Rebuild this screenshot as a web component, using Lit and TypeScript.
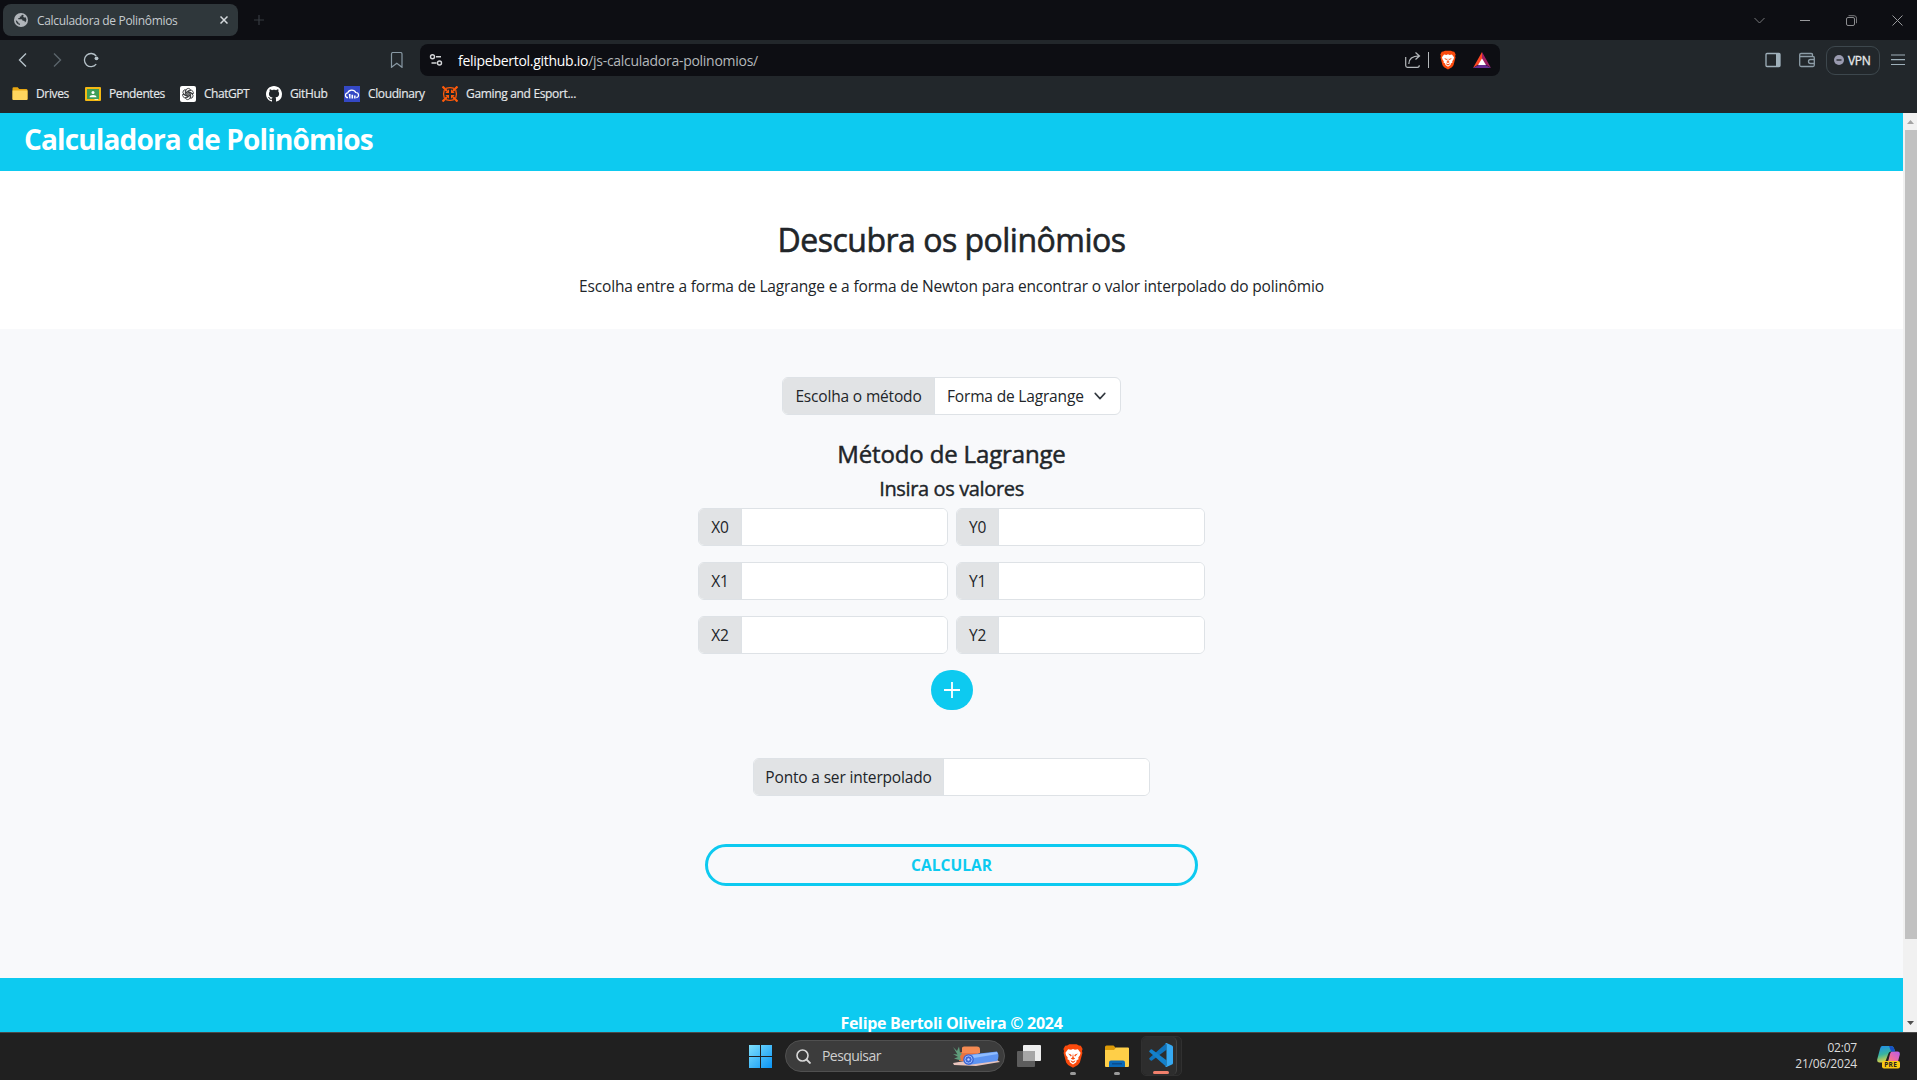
import { LitElement, html, css, svg } from "lit";
import { customElement, state } from "lit/decorators.js";

const BRAVE = svg`
  <path d="M5 1.5 7.3.3h7.4L17 1.5l2 .3 1.8 3.4-.7 2 .5 2-2.6 9.6-2 2.7L11 24.3 6 21.5l-2-2.7L1.400 9.200l.5-2-.7-2L3 1.800z" fill="#fb4a0c"/>
  <path d="M6 5.300l3 .5L11 5l2 .8 3-.5 2.700 3.600-.6 2.500-1.700 2.400.3 1.700-2 1.200-.4 2L11 20.800l-3.300-2.100-.4-2-2-1.200.3-1.700-1.700-2.400-.6-2.500z" fill="#fff"/>
  <path d="M6 9.800l3 .8.700 1.400-.9.700zM16 9.800l-3 .8-.7 1.400.9.700zM11 9.500l.7 4.200 1.600 1L11 16l-2.300-1.300 1.600-1zM8.500 16.500 11 17.800l2.500-1.300-.5 1.400-2 1.400-2-1.400z" fill="#fb4a0c"/>`;

const bookmarks = [
  {
    label: "Drives", cls: "b1",
    icon: svg`<path d="M.5 2.500q0-1.200 1.200-1.200h4l1.500 1.700h7q1.300 0 1.300 1.300V13q0 1-1 1h-13q-1 0-1-1z" fill="#e8a712"/><path d="M.5 4.500h15V13q0 1-1 1h-13q-1 0-1-1z" fill="#ffd55e"/>`,
  },
  {
    label: "Pendentes", cls: "b2",
    icon: svg`<rect y="1" width="16" height="14" rx="1" fill="#f4b913"/><rect x="2" y="3" width="12" height="10" fill="#3f9d58"/><circle cx="8" cy="6.500" r="1.500" fill="#fff"/><path d="M4.500 11.200c0-3 7-3 7 0z" fill="#fff"/><path d="M9.500 13h3.500v1H9.500z" fill="#fff" opacity=".7"/>`,
  },
  {
    label: "ChatGPT", cls: "b3",
    icon: svg`<rect width="16" height="16" rx="2" fill="#fff"/><g fill="none" stroke="#2b2d2f" stroke-width=".8">${[0, 60, 120, 180, 240, 300].map(
      (a) => svg`<path transform="rotate(${a} 8 8)" d="M5.900 9.300V4.600Q6.200 2.400 8.300 2.400 9.700 2.400 10.500 3.500L7.100 5.500V8.200"/>`)}</g>`,
  },
  {
    label: "GitHub", cls: "b4",
    icon: svg`<path fill="#fff" d="M8 0C3.580 0 0 3.580 0 8c0 3.540 2.290 6.530 5.470 7.590.4.070.55-.17.55-.38 0-.19-.01-.82-.01-1.490-2.010.37-2.530-.49-2.690-.94-.09-.23-.48-.94-.82-1.130-.28-.15-.68-.52-.01-.53.63-.01 1.080.58 1.230.82.72 1.210 1.870.87 2.330.66.07-.52.28-.87.51-1.070-1.780-.2-3.640-.89-3.640-3.950 0-.87.31-1.590.82-2.150-.08-.2-.36-1.020.08-2.120 0 0 .67-.21 2.200.82.64-.18 1.320-.27 2-.27s1.360.09 2 .27c1.530-1.040 2.200-.82 2.200-.82.44 1.100.16 1.920.08 2.120.51.56.82 1.270.82 2.150 0 3.070-1.870 3.750-3.650 3.950.29.25.54.73.54 1.480 0 1.070-.01 1.930-.01 2.200 0 .21.15.46.55.38A8.010 8.010 0 0 0 16 8c0-4.420-3.580-8-8-8"/>`,
  },
  {
    label: "Cloudinary", cls: "b5",
    icon: svg`<rect width="16" height="16" fill="#3448c5"/><path d="M4 11.700C.7 11.500.7 7.300 3.700 6.900 5 3.200 10.300 3.200 11.700 6.500c3.600.2 3.800 4.500.6 5.200" fill="none" stroke="#fff" stroke-width="1.200"/><path d="M4.800 8h1.700v4.500H5.300zM7.500 8.800h1.600v3.700H7.500zM10.100 9.600h1.500v2.900h-1.500z" fill="#fff"/>`,
  },
  {
    label: "Gaming and Esport...", cls: "b6",
    icon: svg`<g fill="none" stroke="#ff5a0a" stroke-width="1.300"><path d="M4 2.300q4-1.500 8 0M4 13.700q4 1.500 8 0M2.300 4q-1.500 4 0 8M13.700 4q1.500 4 0 8"/><path d="M.5.500l4.500 4.500M15.500.500 11 5M.5 15.500 5 11M15.500 15.500 11 11" stroke-width="2.200"/></g><path d="M3.300 7h3.700V3.300zM12.700 7H9V3.300zM3.300 9H7v3.700zM12.700 9H9v3.700z" fill="#ff5a0a"/>`,
  },
];

@customElement("browser-chrome")
class BrowserChrome extends LitElement {
  static styles = css`
    :host { display: block; height: 113px; color: #e6e9eb; }
    svg { display: block; flex: none; }
    .tabs { height: 40px; background: #0d0e13; display: flex; align-items: center; }
    .tab { width: 235px; height: 32px; margin-left: 3px; padding: 0 10px 0 11px; box-sizing: border-box; border-radius: 8px; background: #2f373b; display: flex; align-items: center; font-size: 12px; color: #c6cbcf; }
    .tab .name { margin-left: 9px; letter-spacing: -0.33px; flex: 1; white-space: nowrap; }
    .new { margin-left: 16px; }
    .win { margin-left: auto; margin-right: 14px; display: flex; gap: 28px; }
    .bar { height: 40px; background: #22272b; display: flex; align-items: center; }
    .nav { display: flex; gap: 18px; padding-left: 15px; width: 405px; box-sizing: border-box; align-items: center; }
    .nav .mark { margin-left: auto; }
    .omni { margin: 0 0 0 15px; width: 1080px; height: 32px; border-radius: 8px; background: #0d0e13; box-sizing: border-box; padding: 0 8px; display: flex; align-items: center; }
    .url { margin-left: 14px; font-size: 14px; letter-spacing: -0.28px; color: #b4b8bb; flex: 1; }
    .url b { font-weight: 400; color: #fff; }
    .sep { width: 1px; height: 16px; background: #b4b8bb; margin: 0 10px 0 7px; }
    .brave { margin-right: 15px; }
    .tools { margin: 0 12px 0 auto; display: flex; align-items: center; }
    .vpn { width: 54px; height: 29px; box-sizing: border-box; border: 1px solid #3d474d; border-radius: 9px; margin: 0 11px; display: flex; align-items: center; gap: 4px; padding-left: 7px; font-size: 12px; letter-spacing: -0.3px; -webkit-text-stroke: 0.3px; }
    .marks { height: 33px; background: #22272b; display: flex; padding-left: 12px; }
    .marks .item { display: flex; height: 27px; align-items: center; gap: 8px; font-size: 12px; white-space: nowrap; box-sizing: border-box; -webkit-text-stroke: 0.15px; }
    .b1 { width: 73px; letter-spacing: -0.35px; } .b2 { width: 95px; letter-spacing: -0.4px; } .b3 { width: 86px; letter-spacing: -0.45px; }
    .b4 { width: 78px; letter-spacing: -0.35px; } .b5 { width: 98px; letter-spacing: -0.38px; } .b6 { letter-spacing: -0.33px; }
  `;
  render() {
    return html`
      <div class="tabs">
        <div class="tab">
          <svg width="14" height="14" viewBox="0 0 14 14"><circle cx="7" cy="7" r="7" fill="#b0b5ba"/><path d="M8.300 1.700Q6.800 2.200 7.300 3.400H5.800v1.500H4.300v1.400h3.300q1 .2 1 1.400h1.500q1 .3.800 1.900 1.500-.8 1.500-3-.2-1.600-1.200-2.700-.5.800-1.500.4-1-.9 0-1.800Q9.200 1.800 8.300 1.700zM1.800 6.700Q1.600 10.800 5.900 12.100v-1.600H4.800q-.7-.3-.5-1.600Q3 8.700 1.800 6.700z" fill="#2f373b"/></svg>
          <span class="name">Calculadora de Polinômios</span>
          <svg width="8" height="8" viewBox="0 0 8 8"><path d="M.5.5l7 7m0-7l-7 7" stroke="#d5d9dc" stroke-width="1.500"/></svg>
        </div>
        <svg class="new" width="10" height="10" viewBox="0 0 10 10"><path d="M5 0v10M0 5h10" stroke="#363b41" stroke-width="1.200"/></svg>
        <div class="win">
          <svg width="11" height="11" viewBox="0 0 11 11"><path d="M.5 3l5 5 5-5" fill="none" stroke="#76777b"/></svg>
          <svg width="18" height="11" viewBox="0 0 18 11"><path d="M7 5.500h10" stroke="#98999c"/></svg>
          <svg width="18" height="11" viewBox="0 0 18 11"><rect x="7.500" y="2.500" width="8" height="8" rx="1.500" fill="none" stroke="#8c8d90"/><path d="M9.500.7h5.500q2.500 0 2.500 2.500v5" fill="none" stroke="#77787b"/></svg>
          <svg width="18" height="11" viewBox="0 0 18 11"><path d="M7.500.5l10 10m0-10l-10 10" stroke="#98999c"/></svg>
        </div>
      </div>
      <div class="bar">
        <div class="nav">
          <svg width="16" height="16" viewBox="0 0 16 16"><path d="M11 1.500L4.500 8l6.500 6.500" fill="none" stroke="#b6c2c9" stroke-width="1.400"/></svg>
          <svg width="16" height="16" viewBox="0 0 16 16"><path d="M5 1.500L11.500 8 5 14.500" fill="none" stroke="#5b656b" stroke-width="1.400"/></svg>
          <svg width="16" height="16" viewBox="0 0 16 16"><path d="M13.200 12.200A6.600 6.600 0 1 1 13.200 4" fill="none" stroke="#b6c2c9" stroke-width="1.300"/><circle cx="13.500" cy="6.300" r="1.900" fill="#b6c2c9"/></svg>
          <svg class="mark" width="16" height="16" viewBox="0 0 16 16"><path d="M2.500 2q0-1.500 1.500-1.500h7.500q1.500 0 1.500 1.500v13.300L7.800 11.300 2.500 15.300z" fill="none" stroke="#8898a3" stroke-width="1.200"/></svg>
        </div>
        <div class="omni">
          <svg width="16" height="16" viewBox="0 0 16 16"><g fill="none" stroke="#d4d6d8" stroke-width="1.400"><circle cx="4.500" cy="4.800" r="2"/><circle cx="11.500" cy="11" r="2"/><path d="M8 4.800H13M3.500 11H8.500"/></g></svg>
          <span class="url"><b>felipebertol.github.io</b>/js-calculadora-polinomios/</span>
          <svg width="16" height="16" viewBox="0 0 16 16"><path d="M.7 5v8.500q0 1.800 1.800 1.800h10q1.800 0 1.800-2M3.800 12q0-8 10.500-8.200M10.500.5L14.500 4l-4 3.500" fill="none" stroke="#b4b8bb" stroke-width="1.200"/></svg>
          <i class="sep"></i>
          <svg class="brave" width="18" height="20" viewBox="0 -0.500 22 25.500">${BRAVE}</svg>
          <svg width="20" height="18" viewBox="0 0 20 18"><path d="M10 1L1 17l9-6z" fill="#ff4724"/><path d="M10 1l9 16-9-6z" fill="#9e1f63"/><path d="M1 17h18l-9-5z" fill="#662d91"/><path d="M10 7.500L6 14h8z" fill="#fff"/></svg>
        </div>
        <div class="tools">
          <svg width="16" height="16" viewBox="0 0 16 16"><rect x="1" y="1.500" width="14" height="13" rx="1" fill="none" stroke="#9fb0ba" stroke-width="1.300"/><path d="M11 1.500h4v13h-4z" fill="#9fb0ba"/></svg>
          <svg width="34" height="16" viewBox="0 0 34 16"><g fill="none" stroke="#8d9da7" stroke-width="1.300"><path d="M31.500 5V2.800q0-1.300-1.300-1.300H20q-1.300 0-1.300 1.300V13q0 1.500 1.500 1.500H32q1.300 0 1.300-1.500V5.800q0-1.300-1.300-1.300H18.700"/><path d="M33 7.500h-3.500a2 2 0 0 0 0 4H33"/></g></svg>
          <div class="vpn"><svg width="10" height="10" viewBox="0 0 10 10"><circle cx="5" cy="5" r="5" fill="#9a9bb0"/><path d="M2.500 5h5" stroke="#2a2d33" stroke-width="1.400"/></svg>VPN</div>
          <svg width="14" height="12" viewBox="0 0 14 12"><path d="M0 1h14M0 5.700h14M0 10.500h14" stroke="#9fb0ba" stroke-width="1.200"/></svg>
        </div>
      </div>
      <div class="marks">
        ${bookmarks.map((b) => html`<div class="item ${b.cls}"><svg width="16" height="16" viewBox="0 0 16 16">${b.icon}</svg><span>${b.label}</span></div>`)}
      </div>`;
  }
}

@customElement("polynomial-page")
class PolynomialPage extends LitElement {
  static styles = css`
    :host { display: block; width: 1903px; height: 919px; overflow: hidden; background: #f8f9fb; color: #212529; font-size: 16px; }
    * { box-sizing: border-box; }
    h1, h2, h4, h5, p { margin: 0; font-weight: 500; white-space: nowrap; }
    header { height: 58px; background: #0dcaf0; padding: 7px 0 0 24px; color: #fff; }
    h1 { font-size: 28px; font-weight: 700; line-height: 38px; letter-spacing: -0.85px; }
    .intro { height: 158px; background: #fff; display: flex; flex-direction: column; align-items: center; padding-top: 49px; }
    h2 { font-size: 32px; line-height: 40px; letter-spacing: -0.5px; -webkit-text-stroke: 0.6px; }
    .intro p { font-weight: 400; line-height: 24px; margin-top: 14px; font-size: 15.500px; letter-spacing: -0.16px; }
    main { height: 649px; display: flex; flex-direction: column; align-items: center; padding-top: 48px; }
    .group { height: 38px; display: flex; border: 1px solid #dee2e6; border-radius: 6px; overflow: hidden; background: #fff; }
    .label { background: #e1e3e5; border-right: 1px solid #dee2e6; display: flex; align-items: center; justify-content: center; white-space: nowrap; font-size: 15.500px; letter-spacing: -0.17px; }
    .method { width: 339px; }
    .method .label { width: 152px; }
    .choice { flex: 1; display: flex; align-items: center; justify-content: space-between; padding: 0 13px 0 12px; font-size: 15.500px; letter-spacing: -0.17px; }
    h4 { font-size: 24px; line-height: 30px; margin-top: 24px; letter-spacing: -0.15px; -webkit-text-stroke: 0.5px; }
    h5 { font-size: 20px; line-height: 24px; margin-top: 8px; letter-spacing: -0.36px; -webkit-text-stroke: 0.4px; }
    .rows { margin-top: 7px; display: grid; grid-template-columns: 250px 249px; column-gap: 8px; row-gap: 16px; }
    .x .label { width: 43px; } .y .label { width: 42px; }
    .field { flex: 1; min-width: 0; border: 0; outline: 0; padding: 0 12px; background: #fff; }
    .plus { width: 42px; height: 40px; border: 0; padding: 0; border-radius: 20px; background: #0dcaf0; margin-top: 16px; display: flex; align-items: center; justify-content: center; }
    .point { width: 397px; margin-top: 48px; }
    .point .label { width: 190px; }
    .calc { width: 493px; height: 42px; margin-top: 48px; border: 3px solid #0dcaf0; border-radius: 21px; background: transparent; color: #0dcaf0; font: inherit; font-weight: 700; font-size: 15.500px; letter-spacing: 0.05px; padding: 0; }
    footer { height: 80px; background: #0dcaf0; color: #fff; text-align: center; font-weight: 700; padding-top: 33px; line-height: 24px; letter-spacing: -0.3px; }
  `;
  @state() private points = 3;
  render() {
    const rows = Array.from({ length: this.points }, (_, i) => i);
    return html`
      <header><h1>Calculadora de Polinômios</h1></header>
      <section class="intro">
        <h2>Descubra os polinômios</h2>
        <p>Escolha entre a forma de Lagrange e a forma de Newton para encontrar o valor interpolado do polinômio</p>
      </section>
      <main>
        <div class="group method">
          <span class="label">Escolha o método</span>
          <span class="choice"><span>Forma de Lagrange</span><svg width="14" height="14" viewBox="0 0 16 16"><path d="m2.500 5 5.500 6 5.500-6" fill="none" stroke="#343a40" stroke-width="1.800" stroke-linecap="round" stroke-linejoin="round"/></svg></span>
        </div>
        <h4>Método de Lagrange</h4>
        <h5>Insira os valores</h5>
        <div class="rows">
          ${rows.map((i) => ["x", "y"].map((a) => html`<div class="group ${a}"><span class="label">${a.toUpperCase()}${i}</span><input class="field"></div>`))}
        </div>
        <button class="plus" @click=${() => this.points++}><svg width="18" height="18" viewBox="0 0 18 18"><path d="M9 1v16M1 9h16" stroke="#fff" stroke-width="1.800"/></svg></button>
        <div class="group point"><span class="label">Ponto a ser interpolado</span><input class="field"></div>
        <button class="calc">CALCULAR</button>
      </main>
      <footer>Felipe Bertoli Oliveira © 2024</footer>`;
  }
}

@customElement("task-bar")
class TaskBar extends LitElement {
  static styles = css`
    :host { display: flex; height: 48px; box-sizing: border-box; background: #202020; border-top: 1px solid #4a4a4a; padding: 3px 0 3px 749px; color: #dcdcdc; }
    * { box-sizing: border-box; }
    svg { display: block; flex: none; }
    .start { margin-top: 9px; }
    .search { width: 220px; height: 32px; margin: 4px 12px 0 13px; border-radius: 16px; background: #3c3c3c; border: 1px solid #505050; display: flex; align-items: center; padding: 0 4px 0 10px; font-size: 14px; letter-spacing: -0.55px; color: #cfcfcf; }
    .search span { flex: 1; margin-left: 11px; padding-bottom: 1px; }
    .views { margin-top: 9px; }
    .app { width: 24px; display: flex; flex-direction: column; align-items: center; padding-top: 8px; }
    .brave { margin-left: 20px; } .files { margin-left: 20px; }
    .dot { width: 6px; height: 3px; border-radius: 2px; background: #9a9a9a; margin-top: 4px; }
    .stack { width: 41px; height: 40px; margin-left: 12px; border-radius: 5px; background: #262626; border: 1px solid #303030; }
    .code { width: 35px; height: 38px; border-radius: 5px; background: #2d2d2d; border-right: 1px solid #424242; display: flex; flex-direction: column; align-items: center; padding: 6px 0 0 4px; }
    .code .dot { width: 16px; background: #f1806c; }
    .clock { margin-left: auto; text-align: right; font-size: 12px; line-height: 16px; padding-top: 4px; letter-spacing: -0.2px; }
    .pre { margin: 10px 17px 0 20px; }
    .tag { font-size: 6.500px; font-weight: 700; letter-spacing: .3px; }
  `;
  render() {
    return html`
      <svg class="start" width="23" height="23" viewBox="0 0 23 23"><defs><linearGradient id="w" x2="1" y2="1"><stop stop-color="#7fe0fc"/><stop offset="1" stop-color="#0a94f5"/></linearGradient></defs><path d="M0 0h11v11H0zM12 0h11v11H12zM0 12h11v11H0zM12 12h11v11H12z" fill="url(#w)"/></svg>
      <div class="search">
        <svg width="15" height="15" viewBox="0 0 15 15"><circle cx="6.500" cy="6.500" r="5.500" fill="none" stroke="#d8d8d8" stroke-width="1.600"/><path d="M10.500 10.500l4 4" stroke="#d8d8d8" stroke-width="1.800"/></svg>
        <span>Pesquisar</span>
        <svg width="48" height="22" viewBox="0 0 48 22">
          <path d="M1 18l12-2 32-1 3 2-24 4-22-1z" fill="#e8c4bd"/><path d="M7 11q0-4 3-4h14q3 0 3 3v6H7z" fill="#e9733f"/><path d="M10 3q0-1.500 2-1.500h13q3 0 3 3V8H10z" fill="#f58a52"/><path d="M1 2l4 4 2-4.500 1 6 2 1-2 3 1 4-7-2 4-1.500-5-3 4.500.5z" fill="#5f9c7b"/>
          <path d="M14 10l31-3.500q3 4.500 0 9.500l-29 4z" fill="#5d94f2"/><path d="M20 10l25-3 .8 2L22 13z" fill="#8fbcff"/><circle cx="16.500" cy="14.500" r="5.300" fill="#3d66d4"/><circle cx="16.500" cy="14.500" r="3.600" fill="none" stroke="#9bbcff"/><circle cx="16.500" cy="14.500" r="1.200" fill="#c0d4ff"/>
        </svg>
      </div>
      <svg class="views" width="24" height="23" viewBox="0 0 24 23"><rect x="6" width="18" height="16" rx="1" fill="#ededed"/><rect y="6" width="18" height="16" rx="1" fill="#5d5d5d"/><path d="M6 6h12v10H6z" fill="#a6a6a6"/></svg>
      <div class="app brave"><svg width="22" height="24" viewBox="0 0 22 24.500">${BRAVE}</svg><i class="dot"></i></div>
      <div class="app files"><svg width="24" height="24" viewBox="0 0 24 24"><path d="M0 3q0-1.500 1.500-1.500h7L11 4v5H0z" fill="#dc9a07"/><path d="M0 6h9l2-2.500h12q1 0 1 1V22q0 1-1 1H1q-1 0-1-1z" fill="#ffcf48"/><path d="M4 23v-4.500q0-2 2-2h12q2 0 2 2V23z" fill="#0a69b8"/><path d="M7 19h10v1.500H7z" fill="#0b4c8c"/></svg><i class="dot"></i></div>
      <div class="stack"><div class="code">
        <svg width="24" height="24" viewBox="0 0 24 24"><path d="M17.500 0v6.700L3 17.500q-.7.400-1.300 0L.5 16.300q-.6-.7 0-1.400z" fill="#0f74bd"/><path d="M17.500 24v-6.700L3 6.500q-.7-.4-1.300 0L.5 7.700q-.6.700 0 1.400z" fill="#1481cb"/><path d="M17.500 0L23 2.600q1 .5 1 1.500v15.800q0 1-1 1.500L17.500 24q-.9.200-1.500-.5 1.300.3 1.500-1.200V1.700Q17.300.2 16 .5q.6-.7 1.500-.5z" fill="#35a9f2"/></svg>
        <i class="dot"></i></div></div>
      <div class="clock">02:07<br>21/06/2024</div>
      <svg class="pre" width="23" height="24" viewBox="0 0 23 24"><defs><linearGradient id="a" x2=".3" y2="1"><stop stop-color="#1e8cf0"/><stop offset=".55" stop-color="#38b4a0"/><stop offset="1" stop-color="#e8d33d"/></linearGradient><linearGradient id="b" x1="1" x2="0" y2="1"><stop stop-color="#b45cf0"/><stop offset=".6" stop-color="#ef6ba0"/><stop offset="1" stop-color="#f59b60"/></linearGradient></defs>
        <path d="M5 0h9q2.500 0 3.300 3l.7 2.500h-4q-2 0-2.600 2L9 14q-.8 2.500-3 2.500H2.500Q-.5 16.500.3 13L3 3Q3.700 0 5 0z" fill="url(#a)"/><path d="M15 5.500h5.500q3 0 2.200 3.500l-2 7.500H9.500q1.500-.5 2-2.500l1.500-6q.6-2.500 2-2.500z" fill="url(#b)"/><path d="M12 0h2q2.500 0 3.300 3l.7 2.500h-4z" fill="#1752c5"/>
        <rect x="5" y="15" width="18" height="7.500" rx="2" fill="#fbc814"/><text class="tag" x="7.200" y="21.200" fill="#222">PRE</text></svg>`;
  }
}

@customElement("app-root")
class AppRoot extends LitElement {
  static styles = css`
    :host { display: block; width: 1920px; height: 1080px; overflow: hidden; background: #fff; font-family: "Open Sans", "Noto Sans", sans-serif; }
    .screen { width: 1917px; }
    .view { display: flex; height: 919px; }
    .scroll { width: 14px; background: #f1f1f1; display: flex; flex-direction: column; align-items: flex-end; }
    .scroll svg { display: block; flex: none; }
    .thumb { width: 12px; height: 809px; background: #c1c1c1; }
    .down { margin-top: auto; }
  `;
  render() {
    return html`<div class="screen">
      <browser-chrome></browser-chrome>
      <div class="view">
        <polynomial-page></polynomial-page>
        <div class="scroll">
          <svg width="12" height="17" viewBox="0 0 12 17"><path d="M2 11l3.500-4L9 11z" fill="#a3a3a3"/></svg>
          <div class="thumb"></div>
          <svg class="down" width="12" height="17" viewBox="0 0 12 17"><path d="M2 6h7l-3.500 4z" fill="#505050"/></svg>
        </div>
      </div>
      <task-bar></task-bar>
    </div>`;
  }
}
